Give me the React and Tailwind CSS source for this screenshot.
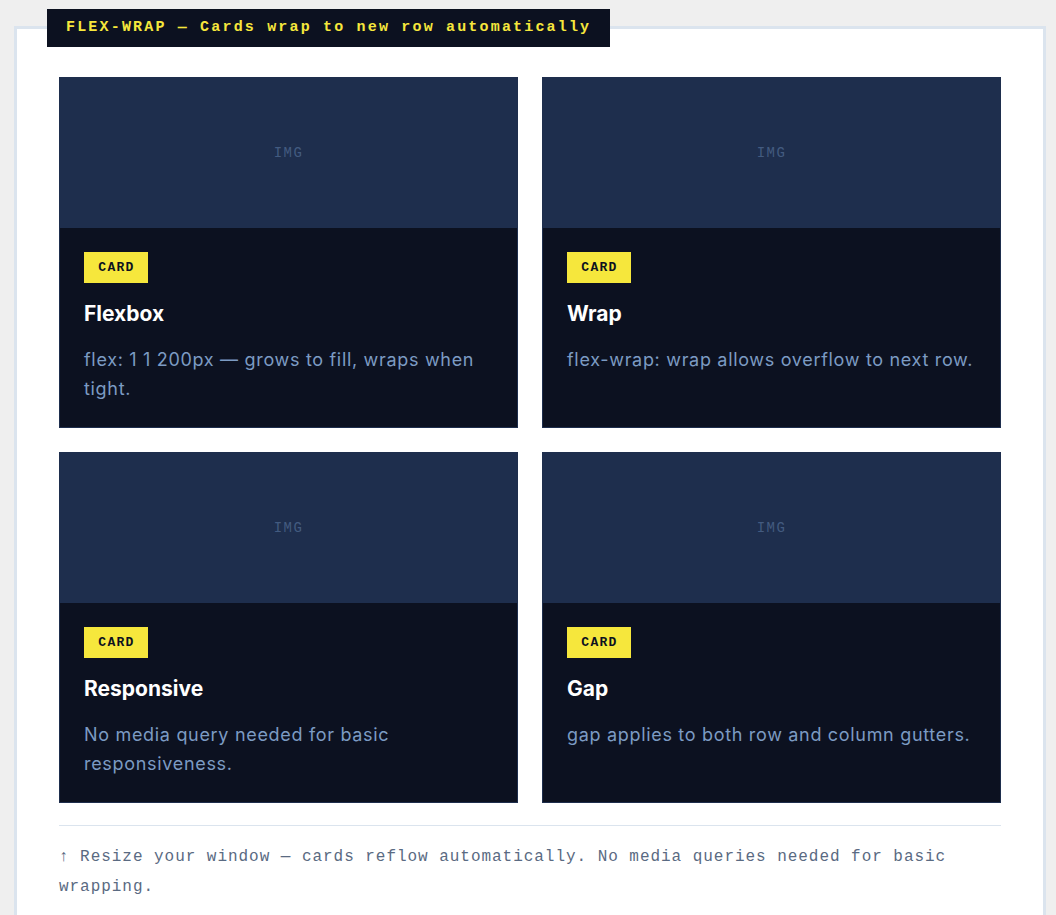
const cards = [
  { title: "Flexbox", text: "flex: 1 1 200px — grows to fill, wraps when tight." },
  { title: "Wrap", text: "flex-wrap: wrap allows overflow to next row." },
  { title: "Responsive", text: "No media query needed for basic responsiveness." },
  { title: "Gap", text: "gap applies to both row and column gutters." },
];

const mono = "font-['Liberation_Mono','DejaVu_Sans_Mono',monospace]";
const sans = "font-['Inter','Noto_Sans',sans-serif]";

function Card({ title, text }) {
  return (
    <div className="flex-[1_1_300px] flex flex-col border border-[#1e2e4d] bg-[#0c1120]">
      <div className={`h-[150px] bg-[#1e2e4d] flex items-center justify-center text-[14px] tracking-[0.1em] text-[#435b80] ${mono}`}>
        IMG
      </div>
      <div className="flex-1 px-6 pt-6 pb-[24px]">
        <div className={`inline-flex items-center justify-center w-[64px] h-[31px] bg-[#f6e73c] text-[#0c1120] text-[13px] font-bold tracking-[0.1em] pl-[1px] ${mono}`}>
          CARD
        </div>
        <h3 className={`mt-[17px] text-[21px] leading-[28px] font-bold text-white ${sans}`}>{title}</h3>
        <p className={`mt-[17px] text-[18px] leading-[29px] text-[#7c9bc3] tracking-[0.038em] ${sans}`}>{text}</p>
      </div>
    </div>
  );
}

export default function App() {
  return (
    <div className="min-h-[915px] bg-[#efefef] pt-[26px] overflow-hidden">
      <div className="relative ml-[14px] w-[1032px] min-h-[900px] bg-white border-[3px] border-[#dbe4ee] px-[42px] pt-[48px]">
        <div className={`absolute -top-[20px] left-[30px] h-[38px] px-[19px] flex items-center bg-[#0c1120] text-[#f6e73c] text-[15px] font-bold tracking-[0.145em] ${mono}`}>
          FLEX-WRAP — Cards wrap to new row automatically
        </div>
        <div className="flex flex-wrap gap-6">
          {cards.map((c) => (
            <Card key={c.title} {...c} />
          ))}
        </div>
        <div className={`mt-[22px] border-t border-[#dbe4ee] pt-[16px] text-[16px] leading-[30px] tracking-[0.06em] text-[#5a6a82] ${mono}`}>
          ↑ Resize your window — cards reflow automatically. No media queries needed for basic wrapping.
        </div>
      </div>
    </div>
  );
}
